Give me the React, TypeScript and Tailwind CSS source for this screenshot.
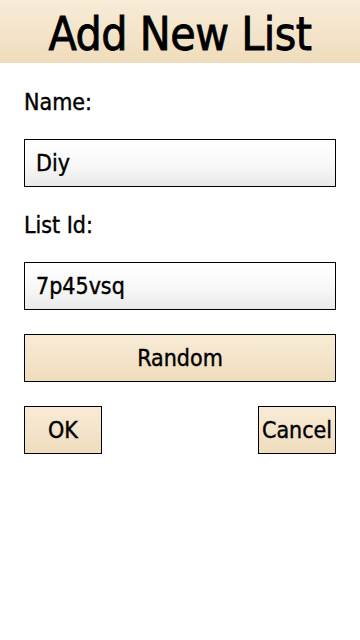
import React from "react";

export default function App() {
  const [name, setName] = React.useState("Diy");
  const [listId, setListId] = React.useState("7p45vsq");

  const font = { fontFamily: '"DejaVu Sans Condensed", "DejaVu Sans", sans-serif' };
  const btn =
    "border border-black bg-gradient-to-b from-[#f8ebd6] to-[#efdcbd] text-[23px] [-webkit-text-stroke:0.4px_black]";
  const field =
    "block w-full h-[48px] border border-black bg-gradient-to-b from-white via-[#f9f9f9] to-[#e9e9e9] px-[11px] text-[23px] outline-none [-webkit-text-stroke:0.4px_black]";

  return (
    <div className="w-[360px] h-[640px] bg-white text-black" style={font}>
      <div className="h-[63px] bg-gradient-to-b from-[#f8ecd8] to-[#efdcbc] flex items-center justify-center pt-[5px]">
        <h1 className="text-[46px] leading-none tracking-[-0.5px] [-webkit-text-stroke:0.8px_black]">Add New List</h1>
      </div>

      <div className="px-6">
        <div className="pt-[26px] text-[23px] leading-[26px] [-webkit-text-stroke:0.4px_black]">Name:</div>
        <input value={name} onChange={(e) => setName(e.target.value)} className={"mt-[24px] " + field} style={font} />

        <div className="pt-[25px] text-[23px] leading-[26px] [-webkit-text-stroke:0.4px_black]">List Id:</div>
        <input value={listId} onChange={(e) => setListId(e.target.value)} className={"mt-[24px] " + field} style={font} />

        <button
          onClick={() => setListId(Math.random().toString(36).slice(2, 9))}
          className={"mt-[24px] block w-full h-[48px] " + btn}
          style={font}
        >
          Random
        </button>

        <div className="mt-[24px] flex justify-between">
          <button className={"w-[78px] h-[48px] " + btn} style={font}>
            OK
          </button>
          <button className={"w-[78px] h-[48px] " + btn} style={font}>
            Cancel
          </button>
        </div>
      </div>
    </div>
  );
}
